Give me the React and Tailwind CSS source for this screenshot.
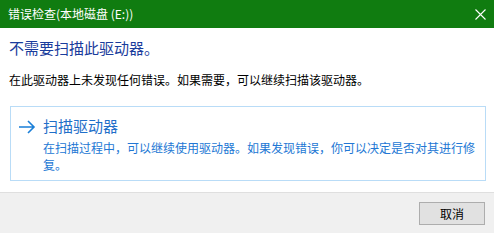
import React from "react";

export default function App() {
  return (
    <div
      className="w-[494px] h-[233px] bg-white flex flex-col overflow-hidden"
      style={{ fontFamily: '"Noto Sans CJK SC", "Noto Sans", sans-serif' }}
    >
      {/* Title bar */}
      <div className="h-[28px] bg-[#107c10] flex items-center justify-between pl-[8px] pr-[8px] shrink-0">
        <span className="text-white text-[12px] leading-[16px]">错误检查(本地磁盘 (E:))</span>
        <svg width="11" height="11" viewBox="0 0 11 11" className="mr-[0px]">
          <path d="M0.5 0.5 L10.5 10.5 M10.5 0.5 L0.5 10.5" stroke="white" strokeWidth="1.1" />
        </svg>
      </div>

      {/* Content */}
      <div className="flex-1 px-[9px] pt-[10px]">
        <h1 className="text-[15px] leading-[20px] text-[#1a3c9c] font-normal">不需要扫描此驱动器。</h1>
        <p className="mt-[14px] text-[12px] leading-[16px] text-black">
          在此驱动器上未发现任何错误。如果需要，可以继续扫描该驱动器。
        </p>

        <div className="mt-[18px] ml-[1px] w-[476px] h-[75px] border border-[#b9dcf7] flex pt-[9px] pl-[7px]">
          <svg width="18" height="14" viewBox="0 0 18 14" className="mt-[4px] shrink-0">
            <path d="M1 7 H16 M10 1 L16 7 L10 13" stroke="#1a7fd8" strokeWidth="1.6" fill="none" />
          </svg>
          <div className="ml-[7px] w-[436px]">
            <div className="text-[15px] leading-[20px] text-[#1f6fc9]">扫描驱动器</div>
            <div className="mt-[3px] text-[12px] leading-[17px] text-[#2277d4]">
              在扫描过程中，可以继续使用驱动器。如果发现错误，你可以决定是否对其进行修复。
            </div>
          </div>
        </div>
      </div>

      {/* Footer */}
      <div className="h-[41px] shrink-0 bg-[#f0f0f0] border-t border-[#dfdfdf] flex justify-end pt-[9px] pr-[9px]">
        <button className="w-[66px] h-[23px] bg-[#e1e1e1] border border-[#adadad] text-[12px] leading-[16px] text-black">
          取消
        </button>
      </div>
    </div>
  );
}
